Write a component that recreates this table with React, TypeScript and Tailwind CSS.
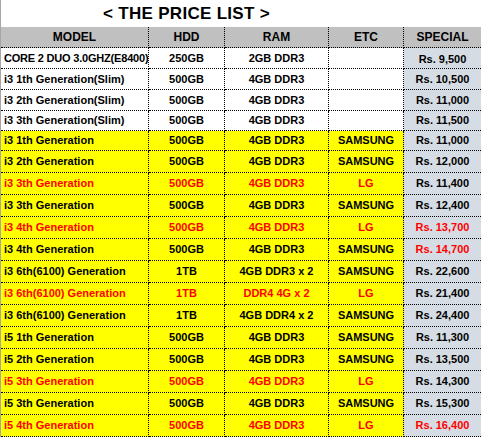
type Row = {
  model: string;
  hdd: string;
  ram: string;
  etc: string;
  price: string;
  red?: boolean;
  priceRed?: boolean;
  yellow?: boolean;
};

const rows: Row[] = [
  { model: "CORE 2 DUO 3.0GHZ(E8400)", hdd: "250GB", ram: "2GB DDR3", etc: "", price: "Rs. 9,500" },
  { model: "i3 1th Generation(Slim)", hdd: "500GB", ram: "4GB DDR3", etc: "", price: "Rs. 10,500" },
  { model: "i3 2th Generation(Slim)", hdd: "500GB", ram: "4GB DDR3", etc: "", price: "Rs. 11,000" },
  { model: "i3 3th Generation(Slim)", hdd: "500GB", ram: "4GB DDR3", etc: "", price: "Rs. 11,500" },
  { model: "i3 1th Generation", hdd: "500GB", ram: "4GB DDR3", etc: "SAMSUNG", price: "Rs. 11,000", yellow: true },
  { model: "i3 2th Generation", hdd: "500GB", ram: "4GB DDR3", etc: "SAMSUNG", price: "Rs. 12,000", yellow: true },
  { model: "i3 3th Generation", hdd: "500GB", ram: "4GB DDR3", etc: "LG", price: "Rs. 11,400", yellow: true, red: true },
  { model: "i3 3th Generation", hdd: "500GB", ram: "4GB DDR3", etc: "SAMSUNG", price: "Rs. 12,400", yellow: true },
  { model: "i3 4th Generation", hdd: "500GB", ram: "4GB DDR3", etc: "LG", price: "Rs. 13,700", yellow: true, red: true, priceRed: true },
  { model: "i3 4th Generation", hdd: "500GB", ram: "4GB DDR3", etc: "SAMSUNG", price: "Rs. 14,700", yellow: true, priceRed: true },
  { model: "i3 6th(6100) Generation", hdd: "1TB", ram: "4GB DDR3 x 2", etc: "SAMSUNG", price: "Rs. 22,600", yellow: true },
  { model: "i3 6th(6100) Generation", hdd: "1TB", ram: "DDR4 4G x 2", etc: "LG", price: "Rs. 21,400", yellow: true, red: true },
  { model: "i3 6th(6100) Generation", hdd: "1TB", ram: "4GB DDR4 x 2", etc: "SAMSUNG", price: "Rs. 24,400", yellow: true },
  { model: "i5 1th Generation", hdd: "500GB", ram: "4GB DDR3", etc: "SAMSUNG", price: "Rs. 11,300", yellow: true },
  { model: "i5 2th Generation", hdd: "500GB", ram: "4GB DDR3", etc: "SAMSUNG", price: "Rs. 13,500", yellow: true },
  { model: "i5 3th Generation", hdd: "500GB", ram: "4GB DDR3", etc: "LG", price: "Rs. 14,300", yellow: true, red: true },
  { model: "i5 3th Generation", hdd: "500GB", ram: "4GB DDR3", etc: "SAMSUNG", price: "Rs. 15,300", yellow: true },
  { model: "i5 4th Generation", hdd: "500GB", ram: "4GB DDR3", etc: "LG", price: "Rs. 16,400", yellow: true, red: true, priceRed: true },
];

// row heights picked off the screenshot grid lines
const heights = ["h-[21px]", "h-[21px]", "h-[21px]", "h-[20px]", "h-[20px]"];

const cell = "flex items-center border-r border-b border-dotted border-black overflow-hidden whitespace-nowrap";

export default function App() {
  return (
    <div className="w-[482px] h-[437px] overflow-hidden bg-white font-['Liberation_Sans',Arial,sans-serif] font-bold text-[11px] text-black">
      <div className="border-l border-[#a6a6a6] w-[481px]">
        <div className="h-[27px] flex items-center pl-[102px] text-[17px] tracking-[0.3px]">
          &lt; THE PRICE LIST &gt;
        </div>

        <div className="flex h-[21px] bg-[#c0c0c0] text-[12px]">
          <div className={`${cell} w-[148px] justify-center`}>MODEL</div>
          <div className={`${cell} w-[76px] justify-center`}>HDD</div>
          <div className={`${cell} w-[104px] justify-center`}>RAM</div>
          <div className={`${cell} w-[75px] justify-center`}>ETC</div>
          <div className={`${cell} w-[77px] justify-center border-r-0`}>SPECIAL</div>
        </div>

        {rows.map((r, i) => (
          <div
            key={i}
            className={`flex ${heights[i] ?? "h-[22px]"} ${r.yellow ? "bg-[#ffff00]" : "bg-white"} ${r.red ? "text-[#ff0000]" : ""}`}
          >
            <div className={`${cell} w-[148px] pl-[3px] ${i === 0 ? "tracking-[-0.2px]" : ""}`}>{r.model}</div>
            <div className={`${cell} w-[76px] justify-center`}>{r.hdd}</div>
            <div className={`${cell} w-[104px] justify-center`}>{r.ram}</div>
            <div className={`${cell} w-[75px] justify-center`}>{r.etc}</div>
            <div
              className={`${cell} w-[77px] justify-center border-r-0 bg-[#d6dce4] ${i === 0 ? "items-end pb-[1px]" : ""} ${r.priceRed ? "text-[#ff0000]" : "text-black"}`}
            >
              {r.price}
            </div>
          </div>
        ))}
      </div>
    </div>
  );
}
